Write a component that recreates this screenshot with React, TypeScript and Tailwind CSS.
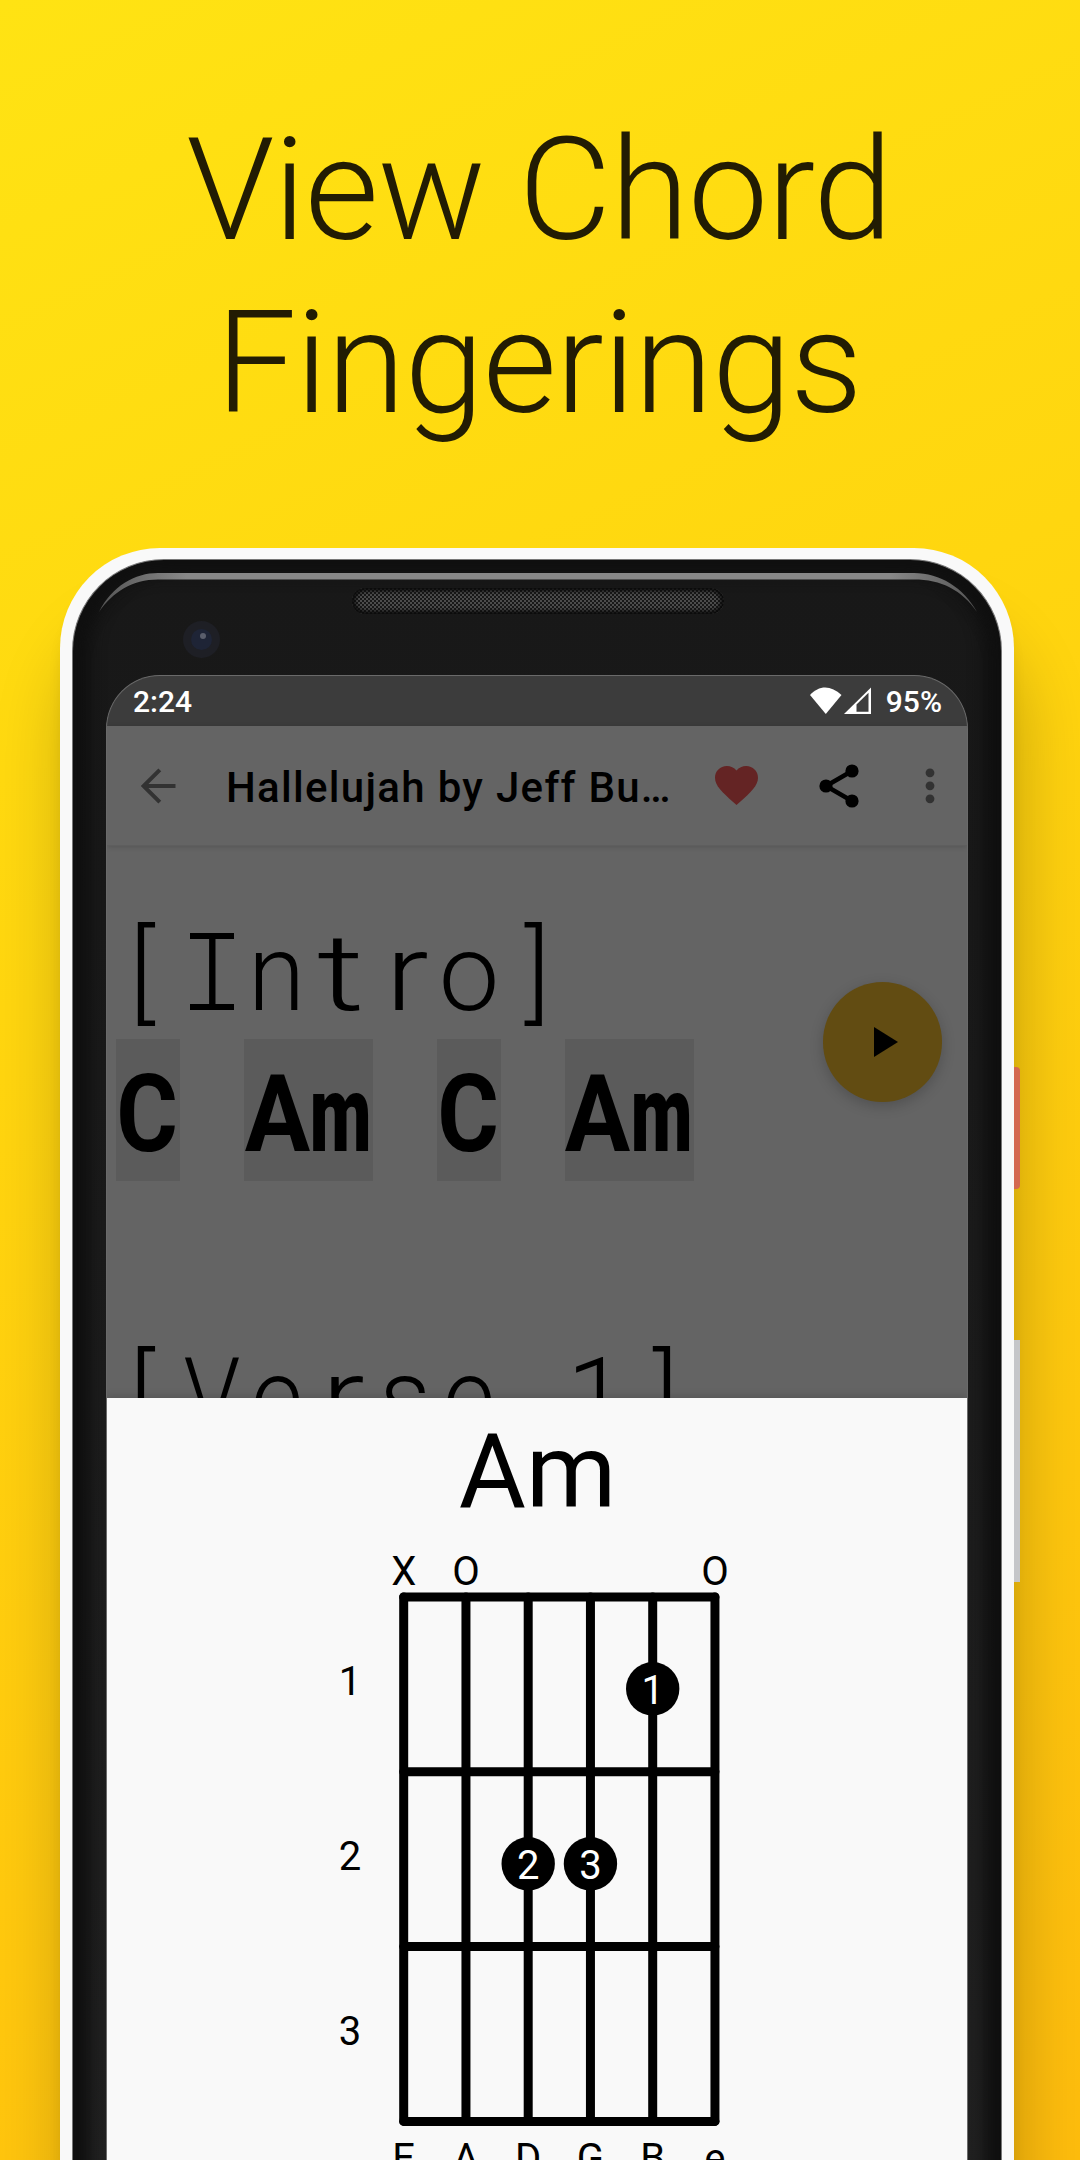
import type { ReactNode } from 'react';

type Glyph = { c: string; sx?: number; font?: string; dx?: number };

const serifI =
  "relative before:absolute before:top-[35px] before:left-1/2 before:h-[5.5px] before:w-[44px] before:-translate-x-1/2 before:bg-black after:absolute after:top-[106px] after:left-1/2 after:h-[5.5px] after:w-[44px] after:-translate-x-1/2 after:bg-black before:content-[''] after:content-['']";

function Cells({ glyphs, className = '' }: { glyphs: Glyph[]; className?: string }) {
  return (
    <span className={`inline-flex h-[141.3px] ${className}`}>
      {glyphs.map((g, i) => (
        <span key={i} className="flex w-[64.2px] justify-center whitespace-pre">
          <span
            className={g.font ?? 'pt-[5px]'}
            style={{ transform: `translateX(${g.dx ?? 0}px) scaleX(${g.sx ?? 1})` }}
          >
            {g.font === serifI ? <span className="block pt-[5px]">{g.c}</span> : g.c}
          </span>
        </span>
      ))}
    </span>
  );
}

const intro: Glyph[] = [
  { c: '[', dx: -6 },
  { c: 'I', font: serifI },
  { c: 'n', sx: 0.97 },
  { c: 't', sx: 1.38, dx: 0.5 },
  { c: 'r', sx: 1.2, dx: 2 },
  { c: 'o', sx: 1.01 },
  { c: ']', dx: 4 },
];

const verse: Glyph[] = [
  { c: '[', dx: -6 },
  { c: 'V', sx: 0.86 },
  { c: 'e', sx: 0.94 },
  { c: 'r', sx: 1.2, dx: 2 },
  { c: 's', sx: 0.95 },
  { c: 'e', sx: 0.94 },
  { c: ' ' },
  { c: '1', dx: -1 },
  { c: ']', dx: 4 },
];

const C: Glyph[] = [{ c: 'C', sx: 0.88, dx: -1 }];
const Am: Glyph[] = [
  { c: 'A', sx: 0.91, dx: 0.5 },
  { c: 'm', sx: 0.67, dx: -0.5, font: 'pt-[5px] font-black' },
];

function Chord({ glyphs }: { glyphs: Glyph[] }) {
  return <Cells glyphs={glyphs} className="bg-[#5b5b5b] font-bold" />;
}

const Line = ({ children }: { children?: ReactNode }) => (
  <div className="flex h-[141.3px] leading-[141.3px]">{children}</div>
);

function ChordDiagram() {
  const xs = [0, 1, 2, 3, 4, 5].map((i) => 403.7 + 62.25 * i);
  const ys = [0, 1, 2, 3].map((i) => 1597 + 174.8 * i);
  const dots = [
    { x: xs[4], y: 1688.8, n: 1 },
    { x: xs[2], y: 1863.8, n: 2 },
    { x: xs[3], y: 1863.8, n: 3 },
  ];
  return (
    <svg
      viewBox="300 1540 480 620"
      className="ml-[6px] h-[620px] w-[480px] shrink-0 text-[40px]"
      textAnchor="middle"
    >
      <g stroke="#000" strokeWidth="9" strokeLinecap="round">
        {xs.map((x) => (
          <line key={x} x1={x} x2={x} y1={ys[0]} y2={ys[3]} />
        ))}
        {ys.map((y) => (
          <line key={y} x1={xs[0]} x2={xs[5]} y1={y} y2={y} />
        ))}
      </g>
      <text x={xs[0]} y="1584.500">X</text>
      <text x={xs[1]} y="1585">O</text>
      <text x={xs[5]} y="1585">O</text>
      {[1, 2, 3].map((n) => (
        <text key={n} x="350" y={1520.3 + 174.8 * n}>{n}</text>
      ))}
      {dots.map((d) => (
        <g key={d.n}>
          <circle cx={d.x} cy={d.y} r="26.7" />
          <text x={d.x} y={d.y + 15} fill="#fff">{d.n}</text>
        </g>
      ))}
      {'EADGBe'.split('').map((s, i) => (
        <text key={s} x={xs[i]} y="2172">{s}</text>
      ))}
    </svg>
  );
}

function StatusBar() {
  return (
    <div className="flex h-[50px] shrink-0 items-center bg-[#3c3c3c] pr-[25px] pl-[26px] text-[30px] font-medium text-white">
      <span className="grow">2:24</span>
      <svg className="mr-[15px] h-[28px] w-[62px]" viewBox="0 0 62 28" fill="#fff">
        <path d="M1 8C10-2 22-2 32.500 8L16.800 27Z" />
        <path d="M35 27L62 0.500V27Z" />
        <path d="M47.500 17.500L59.500 5.800V24.800H47.500Z" fill="#3c3c3c" />
      </svg>
      <span>95%</span>
    </div>
  );
}

function AppBar() {
  return (
    <div className="flex h-[120px] shrink-0 items-center border-b border-[#5e5e5e] bg-[#646464] shadow-[0_1px_5px_rgba(0,0,0,0.15)]">
      <svg className="ml-[34px] h-[36px] w-[36px]" viewBox="0 0 36 36" fill="none" stroke="#323232" strokeWidth="4">
        <path d="M34.500 18H4M18.800 1.800L2.500 18L18.800 34.200" />
      </svg>
      <span className="ml-[49px] w-[446px] pt-[4px] text-[42px] font-medium tracking-[1.3px] whitespace-nowrap">
        Hallelujah by Jeff Bu…
      </span>
      <svg className="ml-[43px] h-[39px] w-[43px]" viewBox="2 3 20 18.350" preserveAspectRatio="none" fill="#642424">
        <path d="M12 21.350l-1.450-1.320C5.400 15.360 2 12.280 2 8.500 2 5.420 4.420 3 7.500 3c1.740 0 3.410.81 4.500 2.090C13.090 3.810 14.760 3 16.500 3 19.580 3 22 5.420 22 8.500c0 3.780-3.400 6.860-8.550 11.540L12 21.350z" />
      </svg>
      <svg className="ml-[61px] h-[44px] w-[40px]" viewBox="0 0 40 44">
        <path d="M33 7L7 22L33 37" fill="none" stroke="#000" strokeWidth="4.500" />
        <circle cx="33" cy="7" r="6.600" />
        <circle cx="7" cy="22" r="6.600" />
        <circle cx="33" cy="37" r="6.600" />
      </svg>
      <svg className="ml-[66px] h-[36px] w-[10px]" viewBox="0 0 10 36" overflow="visible" fill="#323232">
        <circle cx="5" cy="4.800" r="4.400" />
        <circle cx="5" cy="17.800" r="4.400" />
        <circle cx="5" cy="30.800" r="4.400" />
      </svg>
    </div>
  );
}

export default function App() {
  return (
    <div className="flex h-[2160px] w-[1080px] flex-col overflow-hidden bg-[linear-gradient(155deg,#ffe313_0%,#ffd60f_38%,#ffc80e_74%,#ffbd0d_100%)] font-['Roboto',sans-serif] text-black">
      <h1 className="h-[548px] shrink-0 pt-[104px] pr-[2px] text-center text-[143px] leading-[173px] font-light tracking-[-0.95px] text-[#221c03]">
        View Chord
        <br />
        Fingerings
      </h1>

      <div className="relative ml-[60px] h-[1800px] w-[954px] shrink-0 rounded-t-[100px] bg-[#f9f9f9] px-[12px] pt-[11px] shadow-[6px_80px_70px_rgba(0,0,0,0.22),0_20px_14px_rgba(0,0,0,0.06)]">
        <div className="absolute top-[519px] left-[954px] h-[122px] w-[6px] rounded-r-[4px] bg-[#d46850]" />
        <div className="absolute top-[792px] left-[954px] h-[242px] w-[6px] bg-[#c5c6c9]" />

        <div className="flex h-full flex-col rounded-t-[92px] border-x border-t border-[#777] bg-[linear-gradient(#181818_0%,#191919_20%,#222_100%)] px-[33px] shadow-[inset_0_14px_16px_#101010,inset_16px_0_16px_#101010,inset_-16px_0_16px_#101010]">
          <div className="relative h-[115px] shrink-0">
            <svg className="absolute top-[12px] left-[-7px] h-[42px] w-[878px]" viewBox="99 571 878 42">
              <defs>
                <linearGradient id="rim" x1="99" x2="977" y1="0" y2="0" gradientUnits="userSpaceOnUse">
                  <stop offset="0" stopColor="#555" />
                  <stop offset="0.1" stopColor="#888" />
                  <stop offset="0.9" stopColor="#888" />
                  <stop offset="1" stopColor="#555" />
                </linearGradient>
              </defs>
              <path
                d="M99 611C112 585 135 572 158 572H914C940 572 964 587 977 611C962 589 941 578.500 914 578.500H158C132 578.500 113 591 99 611Z"
                fill="url(#rim)"
              />
            </svg>
            <div className="absolute top-[28px] left-[246px] h-[26px] w-[372px] rounded-full bg-[#181818] bg-[radial-gradient(circle_at_1px_1px,#4c4c4c_0.8px,transparent_1.1px),radial-gradient(circle_at_3px_3px,#4c4c4c_0.8px,transparent_1.1px)] bg-[size:4px_4px] shadow-[inset_0_0_4px_3px_#0a0a0a]" />
            <div className="absolute top-[61px] left-[77px] flex h-[37px] w-[37px] items-center justify-center rounded-full bg-[#1e1f25]">
              <div className="h-[21px] w-[21px] rounded-full bg-[#1e2436] pt-[4px] pl-[9px]">
                <div className="h-[6px] w-[6px] rounded-full bg-[#5a5e6c]" />
              </div>
            </div>
          </div>

          <div className="relative flex grow flex-col overflow-hidden rounded-t-[54px] border-x border-t border-[#6a6a6a] bg-[#646464]">
            <StatusBar />
            <AppBar />
            <div className="h-[552px] shrink-0 overflow-hidden pt-[52px] pl-[9px] text-[107px]">
              <Line>
                <Cells glyphs={intro} className="font-light" />
              </Line>
              <Line>
                <div className="flex gap-[64.2px]">
                  <Chord glyphs={C} />
                  <Chord glyphs={Am} />
                  <Chord glyphs={C} />
                  <Chord glyphs={Am} />
                </div>
              </Line>
              <Line />
              <Line>
                <Cells glyphs={verse} className="font-light" />
              </Line>
            </div>
            <div className="absolute top-[306px] left-[716px] flex h-[120px] w-[119px] items-center justify-center rounded-full bg-[#624c12] shadow-[0_4px_14px_rgba(0,0,0,0.2)]">
              <svg className="ml-[6px] h-[30px] w-[24px]" viewBox="0 0 24 30">
                <path d="M0 0L24 15L0 30Z" />
              </svg>
            </div>
            <div className="flex grow flex-col items-center bg-[#f9f9f9] shadow-[0_-2px_8px_rgba(0,0,0,0.15)]">
              <div className="h-[142px] pt-[14px] pl-[1px] text-[103px] leading-[120px]">Am</div>
              <ChordDiagram />
            </div>
          </div>
        </div>
      </div>
    </div>
  );
}
